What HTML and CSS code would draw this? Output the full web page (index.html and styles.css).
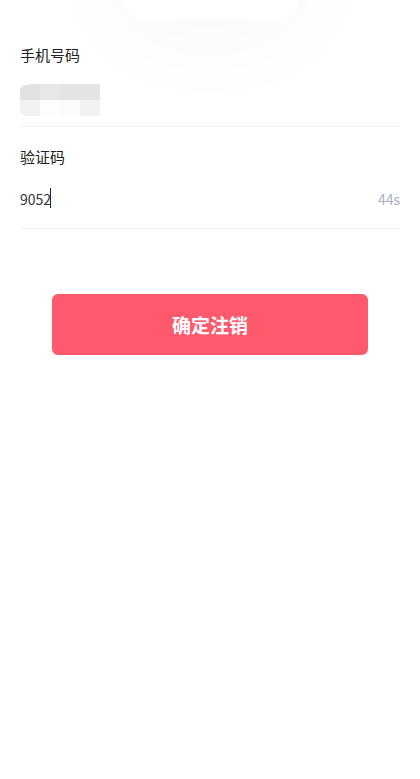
FILE: index.html
```html
<!DOCTYPE html>
<html lang="zh-CN">
<head>
<meta charset="utf-8">
<meta name="viewport" content="width=device-width, initial-scale=1">
<title>确定注销</title>
<link rel="stylesheet" href="styles.css">
</head>
<body>
<header class="hero"><div class="logo-card"></div></header>
<form class="form">
  <section class="field">
    <h2 class="label">手机号码</h2>
    <div class="row row-phone">
      <svg class="mask" viewBox="0 0 80 32" shape-rendering="crispEdges" aria-hidden="true">
        <path fill="#e2e2e2" d="M0 16V4h1V3h2V1h6V0h11v16z"/>
        <path fill="#e7e7e7" d="M20 0h20v16H20z"/>
        <path fill="#e4e4e4" d="M40 0h40v16H40z"/>
        <path fill="#f2f2f2" d="M0 16h20v16H4v-1H2v-2H0z"/>
        <path fill="#fdfdfd" d="M20 16h20v16H20z"/>
        <path fill="#fbfbfb" d="M40 16h20v16H40z"/>
        <path fill="#f1f1f1" d="M60 16h20v16H60z"/>
      </svg>
    </div>
  </section>
  <section class="field">
    <label class="label" for="code">验证码</label>
    <div class="row row-code">
      <div class="code-box">
        <input class="code" id="code" type="text" inputmode="numeric" value="9052">
        <span class="caret"></span>
      </div>
      <span class="countdown">44s</span>
    </div>
  </section>
  <button class="submit" type="button">确定注销</button>
</form>
</body>
</html>
```

FILE: styles.css
```css
* {
  box-sizing: border-box;
}

body {
  margin: 0;
  min-height: 100vh;
  overflow-x: hidden;
  background: #fff;
  color: #222;
  font-family: "Noto Sans CJK SC", sans-serif;
  font-size: 15px;
}

.hero {
  display: flex;
  justify-content: center;
  height: 20px;
  align-items: flex-end;
}

.logo-card {
  flex: none;
  width: 175px;
  height: 175px;
  border-radius: 22px;
  background: #fff;
  box-shadow: 0 12px 100px rgba(0, 0, 0, 0.04);
}

.form {
  position: relative;
  display: flex;
  flex-direction: column;
  padding: 24px 20px;
}

.field {
  display: flex;
  flex-direction: column;
  gap: 10px;
  margin-bottom: 19px;
  border-bottom: 1px solid #f0f0f0;
}

.label {
  margin: 0;
  font-size: 15px;
  font-weight: 400;
  line-height: 22px;
}

.row {
  display: flex;
  align-items: center;
  justify-content: space-between;
  height: 50px;
}

.row-phone {
  padding-bottom: 2px;
}

.row-code {
  padding-bottom: 8px;
}

.mask {
  width: 80px;
  height: 32px;
}

.code-box {
  position: relative;
  flex: 1;
}

.code {
  display: block;
  width: 100%;
  height: 24px;
  padding: 0;
  border: 0;
  outline: 0;
  background: transparent;
  color: #333;
  font-family: inherit;
  font-size: 14px;
  caret-color: transparent;
}

.caret {
  position: absolute;
  top: 1px;
  left: 30px;
  width: 1px;
  height: 20px;
  background: #222;
}

.countdown {
  color: #a9b2c0;
  font-size: 14px;
}

.submit {
  align-self: center;
  width: 83%;
  height: 61px;
  margin-top: 46px;
  border: 0;
  border-radius: 6px;
  background: #ff596d;
  color: #fff;
  font-family: inherit;
  font-size: 19px;
  font-weight: 700;
}
```
